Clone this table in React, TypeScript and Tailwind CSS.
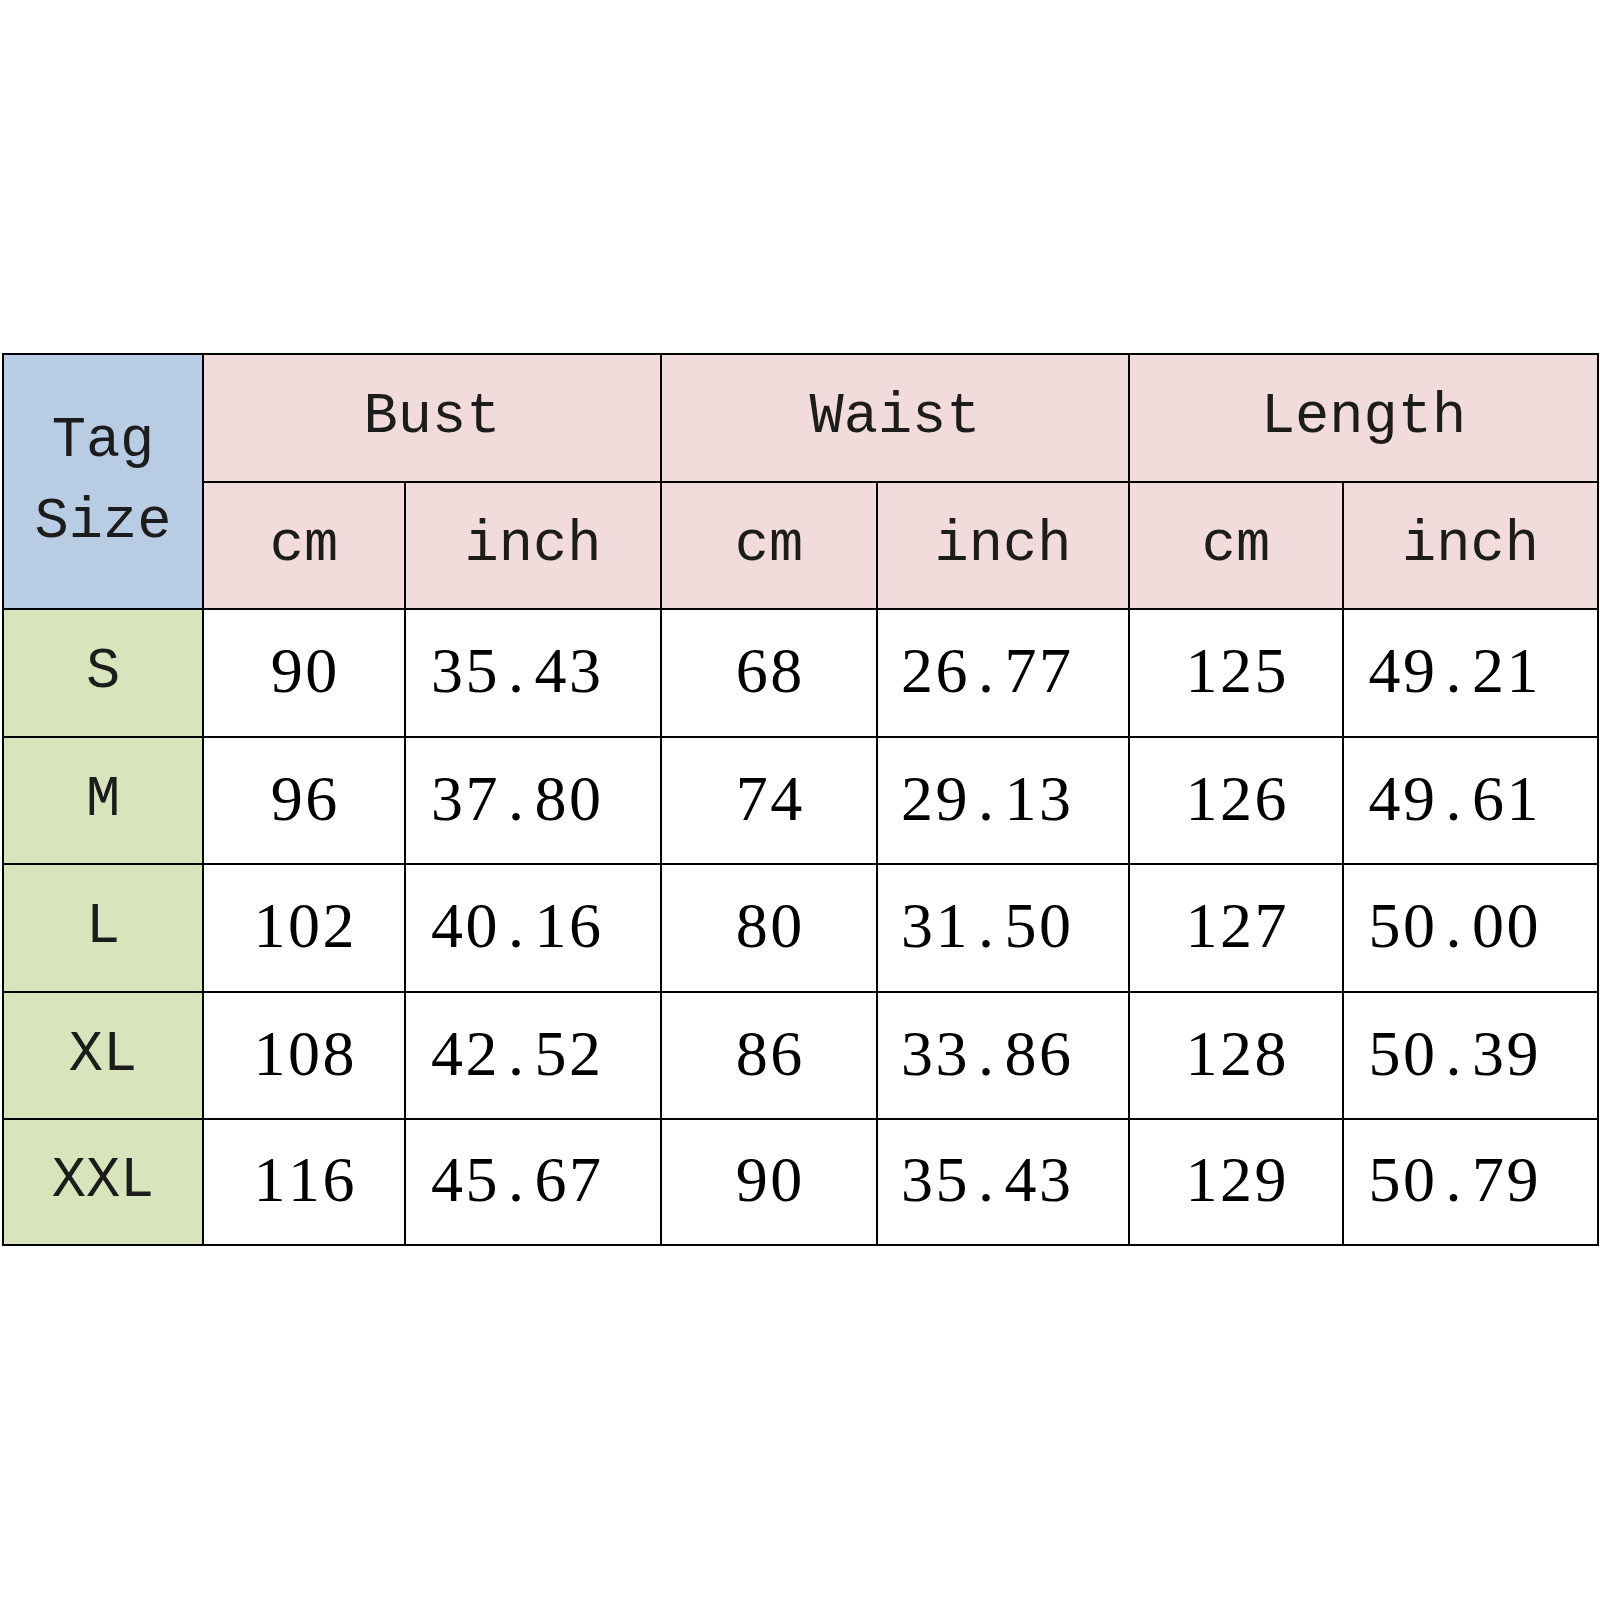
import React from "react";

const rows = [
  { size: "S", bust: ["90", "35.43"], waist: ["68", "26.77"], length: ["125", "49.21"] },
  { size: "M", bust: ["96", "37.80"], waist: ["74", "29.13"], length: ["126", "49.61"] },
  { size: "L", bust: ["102", "40.16"], waist: ["80", "31.50"], length: ["127", "50.00"] },
  { size: "XL", bust: ["108", "42.52"], waist: ["86", "33.86"], length: ["128", "50.39"] },
  { size: "XXL", bust: ["116", "45.67"], waist: ["90", "35.43"], length: ["129", "50.79"] },
];

const rowHeights = ["h-[128px]", "h-[127px]", "h-[128px]", "h-[127px]", "h-[126px]"];

const mono = { fontFamily: '"Liberation Mono", "Courier New", monospace' };
const serif = { fontFamily: '"Liberation Serif", "Times New Roman", serif' };

// each glyph sits in a fixed-width slot, like the original's spacing
const Num = ({ value }: { value: string }) => (
  <span className="inline-flex" style={serif}>
    {value.split("").map((ch, i) => (
      <span key={i} className="inline-block w-[34.5px] text-center">
        {ch}
      </span>
    ))}
  </span>
);

const cellBase = "border-2 border-black text-center align-middle p-0";

export default function App() {
  return (
    <div className="w-[1600px] h-[1600px] bg-white pt-[353px] pl-[2px]">
      <table className="table-fixed border-collapse w-[1597px]">
        <colgroup>
          <col className="w-[200px]" />
          <col className="w-[202px]" />
          <col className="w-[256px]" />
          <col className="w-[216px]" />
          <col className="w-[252px]" />
          <col className="w-[214px]" />
          <col className="w-[255px]" />
        </colgroup>
        <tbody className="text-[57px] text-[#1c1c1c]" style={mono}>
          <tr className="h-[128px]">
            <td rowSpan={2} className={`${cellBase} bg-[#b8cce4] leading-[81px]`}>
              Tag
              <br />
              Size
            </td>
            <td colSpan={2} className={`${cellBase} bg-[#f2dcdb]`}>Bust</td>
            <td colSpan={2} className={`${cellBase} bg-[#f2dcdb]`}>Waist</td>
            <td colSpan={2} className={`${cellBase} bg-[#f2dcdb]`}>Length</td>
          </tr>
          <tr className="h-[127px]">
            <td className={`${cellBase} bg-[#f2dcdb]`}>cm</td>
            <td className={`${cellBase} bg-[#f2dcdb]`}>inch</td>
            <td className={`${cellBase} bg-[#f2dcdb]`}>cm</td>
            <td className={`${cellBase} bg-[#f2dcdb]`}>inch</td>
            <td className={`${cellBase} bg-[#f2dcdb]`}>cm</td>
            <td className={`${cellBase} bg-[#f2dcdb]`}>inch</td>
          </tr>
          {rows.map((r, i) => (
            <tr key={r.size} className={rowHeights[i]}>
              <td className={`${cellBase} bg-[#d8e4bc]`}>{r.size}</td>
              {[r.bust, r.waist, r.length].map((pair, j) => (
                <React.Fragment key={j}>
                  <td className={`${cellBase} bg-white text-[64px] text-black leading-none`}>
                    <Num value={pair[0]} />
                  </td>
                  <td className={`${cellBase} bg-white text-[64px] text-black leading-none pr-[34px]`}>
                    <Num value={pair[1]} />
                  </td>
                </React.Fragment>
              ))}
            </tr>
          ))}
        </tbody>
      </table>
    </div>
  );
}
